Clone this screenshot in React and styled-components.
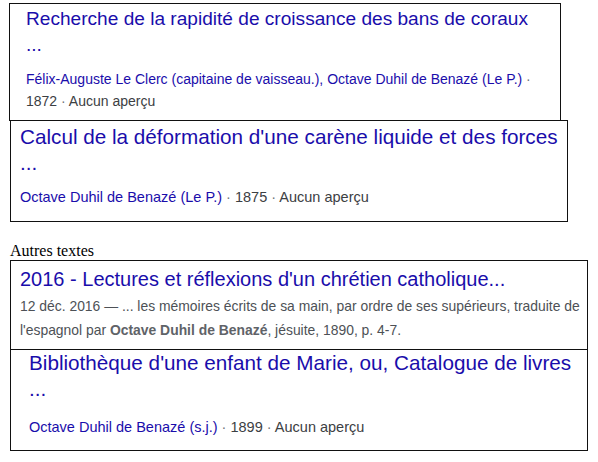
import React from 'react';
import styled, { createGlobalStyle } from 'styled-components';

const Global = createGlobalStyle`
  body {
    margin: 0;
    background: #fff;
  }
`;

const Page = styled.div`
  display: flex;
  flex-direction: column;
  align-items: flex-start;
  padding: 3px 0 0 9px;
  font-family: 'Liberation Sans', Arial, sans-serif;
`;

const Card = styled.div`
  box-sizing: border-box;
  width: ${p => p.w}px;
  margin-left: ${p => p.shift || 0}px;
  margin-top: ${p => p.top || 0}px;
  padding: ${p => p.pad};
  border: 1px solid #111;
  background: #fff;
`;

const Title = styled.div`
  font-size: ${p => p.size || 20}px;
  line-height: 26px;
  white-space: nowrap;
  color: #1a0dab;
`;

const Meta = styled.div`
  margin-top: ${p => p.gap || 10}px;
  font-size: ${p => p.size || 14}px;
  line-height: 22px;
  white-space: nowrap;
  color: #3c4043;
`;

const Author = styled.span`
  color: #1a0dab;
`;

const Dot = styled.span`
  color: #70757a;
`;

const Snippet = styled.div`
  margin-top: 2px;
  font-size: 13.9px;
  line-height: 24px;
  white-space: nowrap;
  color: #4d5156;

  b {
    color: #5f6368;
  }
`;

const Label = styled.div`
  margin: 20px 0 0 1px;
  font-family: 'Liberation Serif', 'Times New Roman', serif;
  font-size: 16px;
  line-height: 18px;
  color: #000;
`;

const App = () => (
  <>
    <Global />
    <Page>
      <Card w={552} pad="2px 10px 8px 16px">
        <Title size={19.1}>
          Recherche de la rapidité de croissance des bans de coraux
          <br />...
        </Title>
        <Meta>
          <Author>
            Félix-Auguste Le Clerc (capitaine de vaisseau.), Octave Duhil de Benazé (Le P.)
          </Author>
          <Dot> · </Dot>
          <br />
          1872<Dot> · </Dot>Aucun aperçu
        </Meta>
      </Card>

      <Card w={558} shift={1} top={-1} pad="3px 4px 13px 9px">
        <Title size={20.7}>
          Calcul de la déformation d'une carène liquide et des forces
          <br />...
        </Title>
        <Meta size={14.5}>
          <Author>Octave Duhil de Benazé (Le P.)</Author>
          <Dot> · </Dot>1875<Dot> · </Dot>Aucun aperçu
        </Meta>
      </Card>

      <Label>Autres textes</Label>

      <Card w={578} shift={1} pad="5px 6px 7px 9px">
        <Title>2016 - Lectures et réflexions d'un chrétien catholique...</Title>
        <Snippet>
          12 déc. 2016 — ... les mémoires écrits de sa main, par ordre de ses supérieurs, traduite de
          <br />
          l'espagnol par <b>Octave Duhil de Benazé</b>, jésuite, 1890, p. 4-7.
        </Snippet>
      </Card>

      <Card w={578} shift={1} top={-1} pad="0 8px 12px 18px">
        <Title size={20.7}>
          Bibliothèque d'une enfant de Marie, ou, Catalogue de livres
          <br />...
        </Title>
        <Meta size={14.5} gap={14}>
          <Author>Octave Duhil de Benazé (s.j.)</Author>
          <Dot> · </Dot>1899<Dot> · </Dot>Aucun aperçu
        </Meta>
      </Card>
    </Page>
  </>
);

export default App;
